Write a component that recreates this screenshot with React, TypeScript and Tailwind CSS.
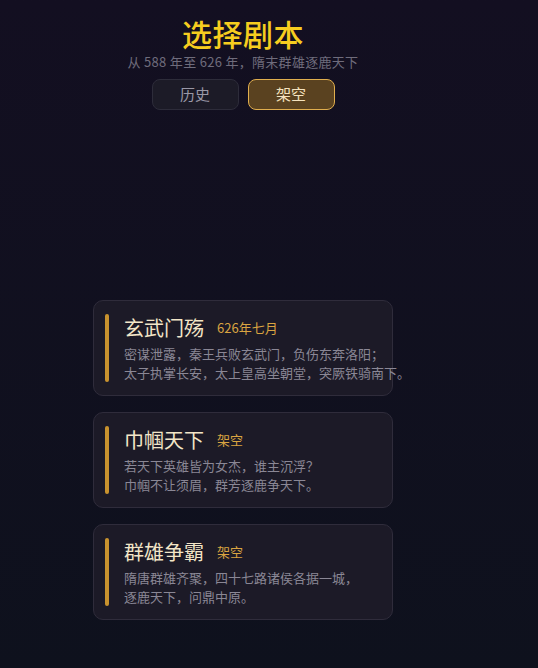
import { useState } from 'react';

type Script = {
    id: string;
    title: string;
    tag: string;
    lines: string[];
};

const scripts: Script[] = [
    {
        id: 'xuanwu',
        title: '玄武门殇',
        tag: '626年七月',
        lines: ['密谋泄露，秦王兵败玄武门，负伤东奔洛阳；', '太子执掌长安，太上皇高坐朝堂，突厥铁骑南下。'],
    },
    {
        id: 'jinguo',
        title: '巾帼天下',
        tag: '架空',
        lines: ['若天下英雄皆为女杰，谁主沉浮？', '巾帼不让须眉，群芳逐鹿争天下。'],
    },
    {
        id: 'qunxiong',
        title: '群雄争霸',
        tag: '架空',
        lines: ['隋唐群雄齐聚，四十七路诸侯各据一城，', '逐鹿天下，问鼎中原。'],
    },
];

export default function App() {
    const [mode, setMode] = useState<'history' | 'fiction'>('fiction');

    return (
        <div
            className="min-h-screen w-full bg-gradient-to-b from-[#130f21] to-[#0e111d]"
            style={{ fontFamily: '"Noto Sans CJK SC", "Noto Sans", sans-serif' }}
        >
            <div className="w-[486px] flex flex-col items-center pt-[16px]">
                {/* Header */}
                <h1 className="text-[30px] leading-[34px] font-medium text-[#f6cd1f] tracking-[0.5px]">
                    选择剧本
                </h1>
                <p className="mt-[2px] text-[13px] leading-[20px] text-[#6f6c7c] tracking-[0.3px]">
                    从 588 年至 626 年，隋末群雄逐鹿天下
                </p>

                {/* Mode tabs */}
                <div className="flex gap-[9px] mt-[7px]">
                    <button
                        onClick={() => setMode('history')}
                        className={`w-[87px] h-[31px] rounded-[8px] border-[1.5px] text-[15px] ${mode === 'history'
                            ? 'bg-[#5a4220] border-[#e0ae4e] text-[#f5e3bf]'
                            : 'bg-[#1c1b27] border-[#2d2c3a] text-[#9a98a6]'
                            }`}
                    >
                        历史
                    </button>
                    <button
                        onClick={() => setMode('fiction')}
                        className={`w-[87px] h-[31px] rounded-[8px] border-[1.5px] text-[15px] ${mode === 'fiction'
                            ? 'bg-[#5a4220] border-[#e0ae4e] text-[#f5e3bf]'
                            : 'bg-[#1c1b27] border-[#2d2c3a] text-[#9a98a6]'
                            }`}
                    >
                        架空
                    </button>
                </div>

                {/* Script list */}
                <div className="flex flex-col gap-4 mt-[190px]">
                    {scripts.map(s => (
                        <div
                            key={s.id}
                            className="w-[300px] flex gap-[15px] rounded-[10px] border border-[#2f2c3b] bg-[#1c1a27] pl-[11px] py-[13px]"
                        >
                            <div className="w-[4px] rounded-full bg-[#c8922e] shrink-0" />
                            <div className="flex flex-col gap-[2px]">
                                <div className="flex items-center gap-[13px] h-[28px]">
                                    <span className="text-[20px] leading-[28px] text-[#f3e6c8]">{s.title}</span>
                                    <span className="text-[13px] leading-[18px] text-[#d9a441]">{s.tag}</span>
                                </div>
                                <div className="text-[13px] leading-[19px] text-[#8a8795]">
                                    {s.lines.map(line => (
                                        <div key={line} className="whitespace-nowrap">{line}</div>
                                    ))}
                                </div>
                            </div>
                        </div>
                    ))}
                </div>
            </div>
        </div>
    );
}
